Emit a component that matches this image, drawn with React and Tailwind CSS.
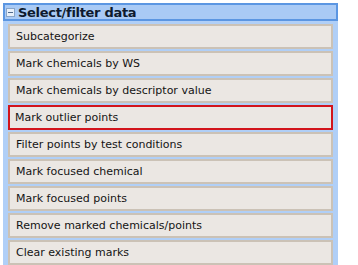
const items = [
  'Subcategorize',
  'Mark chemicals by WS',
  'Mark chemicals by descriptor value',
  'Mark outlier points',
  'Filter points by test conditions',
  'Mark focused chemical',
  'Mark focused points',
  'Remove marked chemicals/points',
  'Clear existing marks',
];

const App = () => {
  return (
    <div className="w-[358px] h-[265px] bg-white overflow-hidden" style={{ fontFamily: '"DejaVu Sans", sans-serif' }}>
      <div className="ml-[3px] mt-[3px] w-[335px] h-[262px] bg-[#b0cff7]">
        {/* header */}
        <div className="h-[18px] flex items-center border-2 border-[#5b96e2] bg-[#a9caf5] pl-[1px]">
          <span className="w-[9px] h-[9px] border border-[#8aa6c8] bg-[#e8f0fa] flex items-center justify-center mr-[3px]">
            <span className="block w-[5px] h-px bg-[#506a8c]" />
          </span>
          <span className="text-[13px] font-bold text-[#0e1a2e] leading-none tracking-[-0.3px]">Select/filter data</span>
        </div>

        <div className="flex flex-col gap-[2px] px-[5px] pt-[3px]">
          {items.map((label, i) => (
            <div
              key={label}
              className={
                i === 3
                  ? 'h-[25px] flex items-center border-2 border-[#d2141c] bg-[#ebe7e3] pl-[5px] pt-[2px] text-[11px] text-[#141414]'
                  : 'h-[25px] flex items-center border-2 border-[#cbc2b6] bg-[#ebe7e3] pl-[6px] pt-[2px] text-[11px] text-[#141414]'
              }
            >
              {label}
            </div>
          ))}
        </div>
      </div>
    </div>
  );
};

export default App;
